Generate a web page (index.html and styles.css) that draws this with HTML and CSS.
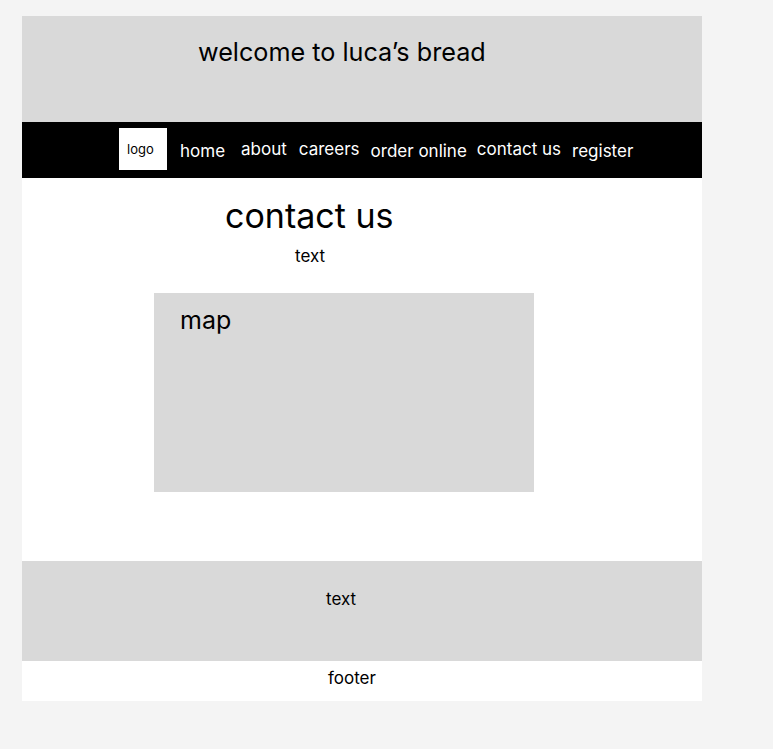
FILE: index.html
```html
<!DOCTYPE html>
<html>
<head>
<meta charset="utf-8">
<link rel="stylesheet" href="styles.css">
</head>
<body>
<div class="page">
  <header class="top">
    <h1 class="welcome">welcome to luca’s bread</h1>
  </header>
  <nav class="nav">
    <div class="logo">logo</div>
    <a class="item home">home</a>
    <a class="item about">about</a>
    <a class="item careers">careers</a>
    <a class="item order">order online</a>
    <a class="item contact">contact us</a>
    <a class="item register">register</a>
  </nav>
  <main class="main">
    <h2 class="title">contact us</h2>
    <p class="intro">text</p>
    <div class="map">map</div>
  </main>
  <section class="band">
    <p class="band-text">text</p>
  </section>
  <footer class="footer">footer</footer>
</div>
</body>
</html>
```
FILE: styles.css
```css
* { box-sizing: border-box; }
body {
  margin: 0;
  background: #f4f4f4;
  font-family: Inter, "Noto Sans", sans-serif;
  color: #000;
}
.page {
  width: 680px;
  margin: 16px 0 0 22px;
}
.top {
  height: 106px;
  background: #d9d9d9;
  padding: 21px 0 0 176px;
}
.welcome {
  margin: 0;
  font-size: 25.2px;
  font-weight: 400;
  line-height: 30px;
}
.nav {
  height: 56px;
  background: #000;
  display: flex;
  align-items: center;
  padding-left: 97px;
}
.logo {
  width: 48px;
  height: 42px;
  background: #fff;
  font-size: 13px;
  display: flex;
  align-items: center;
  padding-left: 8px;
  margin-top: -2px;
}
.item {
  color: #fff;
  font-size: 17px;
  line-height: 20px;
}
.home { margin-left: 13px; margin-top: 2px; }
.about { margin-left: 16px; margin-top: -2px; }
.careers { margin-left: 12px; margin-top: -2px; }
.order { margin-left: 11px; margin-top: 2px; }
.contact { margin-left: 10px; margin-top: -2px; }
.register { margin-left: 11px; margin-top: 2px; }
.main {
  height: 383px;
  background: #fff;
  padding-top: 18px;
}
.title {
  margin: 0 0 0 203px;
  font-size: 34px;
  font-weight: 400;
  line-height: 40px;
}
.intro {
  margin: 10px 0 0 273px;
  font-size: 17px;
  line-height: 20px;
}
.map {
  margin: 27px 0 0 132px;
  width: 380px;
  height: 199px;
  background: #d9d9d9;
  font-size: 25px;
  line-height: 30px;
  padding: 12px 0 0 26px;
}
.band {
  height: 100px;
  background: #d9d9d9;
  padding: 28px 0 0 304px;
}
.band-text {
  margin: 0;
  font-size: 17px;
  line-height: 20px;
}
.footer {
  height: 40px;
  background: #fff;
  padding: 7px 0 0 306px;
  font-size: 17px;
  line-height: 20px;
}
```
